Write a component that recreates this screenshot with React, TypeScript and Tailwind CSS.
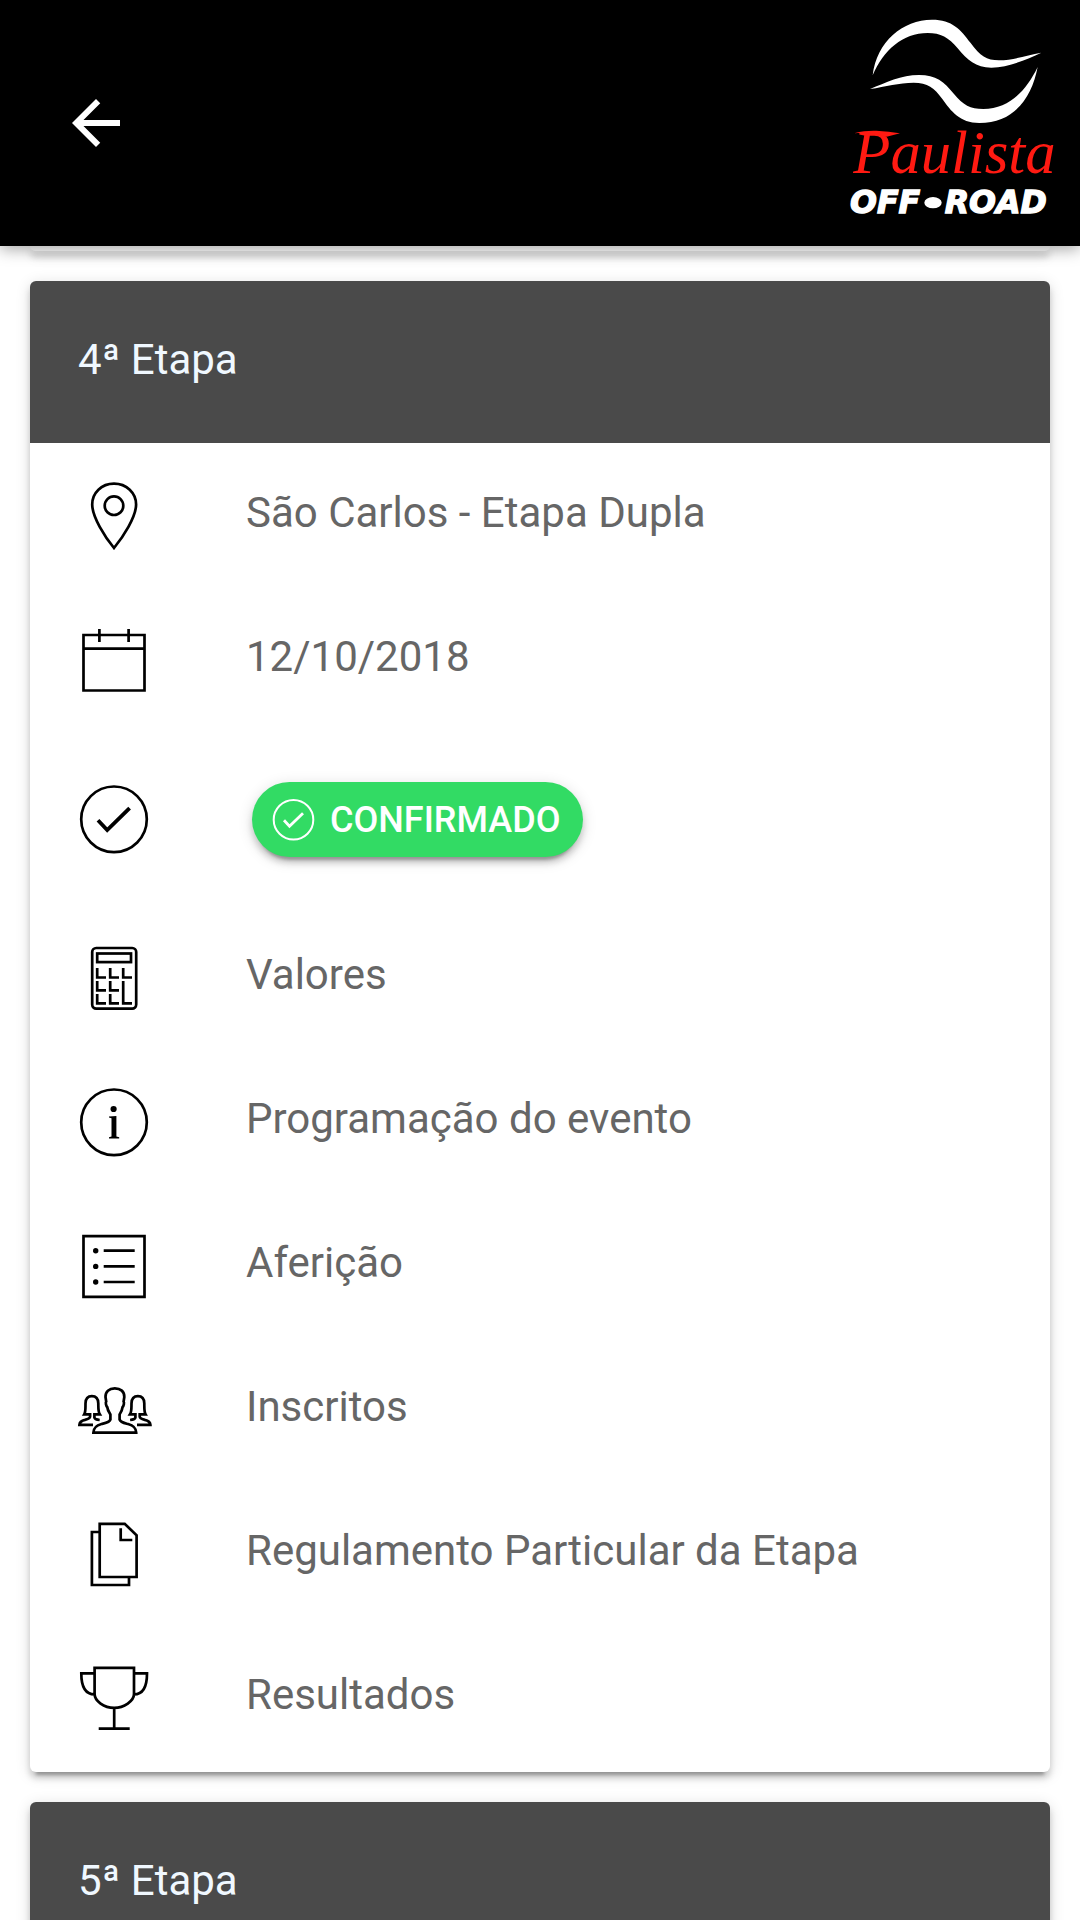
import { clsx } from 'clsx';
import type { ReactNode } from 'react';

const CARD_SHADOW =
  'shadow-[0_6px_6px_0_rgba(0,0,0,0.16),0_9px_3px_-6px_rgba(0,0,0,0.24),0_3px_15px_0_rgba(0,0,0,0.14)]';

function Icon({ children }: { children: ReactNode }) {
  return (
    <svg
      viewBox="0 0 84 84"
      className="size-21 shrink-0"
      fill="none"
      stroke="currentColor"
      strokeWidth="2.7"
      aria-hidden="true"
    >
      {children}
    </svg>
  );
}

const icons = {
  pin: (
    <Icon>
      <path d="M42 9.7C29.5 9.7 20.2 19 20.2 30.5C20.2 43 33 63 42 74C51 63 64.1 43 64.1 30.5C64.1 19 54.5 9.7 42 9.7Z" />
      <circle cx="42" cy="31.7" r="9.3" />
    </Icon>
  ),
  calendar: (
    <Icon>
      <path d="M11.5 17H72.5V72.5H11.5ZM11.5 30.7H72.5M27.4 11V24M56.6 11V24" />
    </Icon>
  ),
  check: (
    <Icon>
      <circle cx="42" cy="42.3" r="32.8" />
      <path strokeWidth="3.8" d="M26 43.3L35.2 53.1L57.6 31.1" />
    </Icon>
  ),
  calculator: (
    <Icon>
      <rect x="20.2" y="12" width="44" height="60.6" rx="4" />
      <rect x="25.2" y="17.5" width="33.8" height="8.6" />
      <path d="M25.2 32V41.5H34M38.2 32V41.5H47M51.2 32V41.5H60M25.2 45V54.3H34M38.2 45V54.3H47M25.2 58V67.4H34M38.2 58V67.4H47M51.2 45V67.4H60" />
    </Icon>
  ),
  info: (
    <Icon>
      <circle cx="42" cy="42.3" r="32.8" />
      <circle cx="41.6" cy="29" r="3.1" fill="currentColor" stroke="none" />
      <path
        d="M37 36.4L44.4 36V56.4L47.2 57.2V58.4H37V57.2L39.5 56.4V38.2L37 37.4Z"
        fill="currentColor"
        stroke="none"
      />
    </Icon>
  ),
  list: (
    <Icon>
      <path d="M11.5 12.2H72.5V72.8H11.5ZM31.7 26.7H62.7M31.7 42.4H62.7M31.7 58H62.7" />
      <g fill="currentColor" stroke="none">
        <circle cx="23.7" cy="26.7" r="2.7" />
        <circle cx="23.7" cy="42.4" r="2.7" />
        <circle cx="23.7" cy="58" r="2.7" />
      </g>
    </Icon>
  ),
  people: (
    <Icon>
      <path d="M42.8 20.4C37 20.4 33.3 23.5 33.5 29L34.2 33.5C33.4 34.5 34 38 35.3 39.2C35.8 43 37.5 44.5 38.4 46.5V51.5C37.5 54.5 33.5 55 29.5 56C24 57.5 21.6 59.5 21.4 64.6H64.2C64 59.5 61.6 57.5 56.1 56C52 55 48.5 54.5 47.6 51.5V46.5C48.5 44.5 50 43 50.5 39.2C51.8 38 52.4 34.5 51.6 33.5L52.3 29C52.5 23.5 48.6 20.4 42.8 20.4Z" />
      <path d="M21 56.8H7.4C7.6 53.6 10 52.6 13 51.9C16.5 51 18.1 50.3 18.1 48.5V46.3H12.2C13.8 43.5 13.4 39.5 13.5 35.5C13.6 30.8 15.8 28.2 19.9 28.2C24 28.2 26.2 30.8 26.3 35.5C26.4 39.5 26 43.5 27.8 46.3H22.4V49.5C22.6 51 24.3 51.6 27.7 52" />
      <path d="M65 56.8H78.4C78.2 53.6 75.8 52.6 72.8 51.9C69.3 51 67.7 50.3 67.7 48.5V46.3H73.6C72 43.5 72.4 39.5 72.3 35.5C72.2 30.8 70 28.2 65.9 28.2C61.8 28.2 59.6 30.8 59.5 35.5C59.4 39.5 59.8 43.5 58 46.3H63.4V49.5C63.2 51 61.5 51.6 58.1 52" />
    </Icon>
  ),
  documents: (
    <Icon>
      <path d="M27.7 11.8H52.7L64.6 23.3V65H27.7ZM27.7 20H19.9V73H57V65M48.7 16.3V28H60.3" />
    </Icon>
  ),
  trophy: (
    <Icon>
      <path d="M22.6 11.8H62V38C62 45 52 51.8 42.2 51.8C32 51.8 22.6 45 22.6 38ZM42.2 51.8V72.6M26.7 72.6H57.7M22.6 17.4H9.3C9.3 30 13 38.3 22.6 38.3M62 17.4H75C75 30 71.3 38.3 62 38.3" />
    </Icon>
  ),
};

const ITEMS = [
  { icon: icons.calculator, label: 'Valores' },
  { icon: icons.info, label: 'Programação do evento' },
  { icon: icons.list, label: 'Aferição' },
  { icon: icons.people, label: 'Inscritos' },
  { icon: icons.documents, label: 'Regulamento Particular da Etapa' },
  { icon: icons.trophy, label: 'Resultados' },
];

function Logo() {
  return (
    <svg viewBox="0 0 720 738" className="h-[246px] w-60" role="img" aria-label="Paulista Off-Road">
      <g fill="#fff">
        <path d="M98 226C110 125 188 59 276 59C337 59 362 89 392 129C421 168 439 181 477 181C520 181 559 166 604 158C560 178 506 203 454 203C407 203 382 180 353 145C326 112 302 99 263 99C188 99 131 150 98 226Z" />
        <path d="M90 267C137 248 184 225 237 225C288 225 312 245 342 282C369 315 391 327 430 327C507 327 558 273 593 201C575 294 522 369 418 369C359 369 333 333 307 297C283 263 263 248 221 248C176 248 138 260 90 267Z" />
      </g>
      <text x="40" y="520" className="fill-[#ff1a12] font-['Liberation_Serif'] text-[182px] italic">
        Paulista
      </text>
      <path d="M42 400C90 388 120 392 180 400L140 410C110 400 78 398 42 400Z" fill="#ff1a12" />
      <g className="fill-white stroke-white font-['DejaVu_Sans'] text-[95px] font-bold italic" strokeWidth="4">
        <text x="30" y="640">
          OFF
        </text>
        <text x="314" y="640">
          ROAD
        </text>
      </g>
      <ellipse cx="279" cy="608" rx="26" ry="17" fill="#fff" />
    </svg>
  );
}

function Header() {
  return (
    <header className="relative z-10 flex shrink-0 items-center justify-between bg-black shadow-[0_3px_15px_0_rgba(0,0,0,0.36)]">
      <button type="button" aria-label="Voltar" className="ml-15 text-white">
        <svg viewBox="0 0 24 24" className="size-18" fill="currentColor" aria-hidden="true">
          <path d="M20 11H7.83l5.59-5.59L12 4l-8 8 8 8 1.41-1.41L7.83 13H20v-2z" />
        </svg>
      </button>
      <Logo />
    </header>
  );
}

function StageCard({ title, children }: { title: string; children?: ReactNode }) {
  return (
    <section className={clsx('shrink-0 rounded-md bg-white', CARD_SHADOW)}>
      <h2 className="flex h-[162px] items-center rounded-t-md bg-[#4a4a4a] px-12 pb-1 text-[42px] leading-[48px] text-[#f0f8ff]">
        {title}
      </h2>
      {children}
    </section>
  );
}

const ROW = 'flex h-36 w-full items-center gap-[90px] px-[42px] text-left';
const LABEL = 'pb-1.5 text-[42px] leading-[48px] text-[#666]';

export default function App() {
  return (
    <div className="flex h-screen flex-col overflow-hidden bg-white font-['Roboto',sans-serif]">
      <Header />
      <main className="flex min-h-0 flex-1 flex-col gap-[30px] overflow-hidden px-[30px]">
        <div className={clsx('h-[5px] shrink-0 rounded-b-md bg-white', CARD_SHADOW)} />
        <StageCard title="4ª Etapa">
          <ul className="pt-px pb-0.5 text-black">
            <li className={ROW}>
              {icons.pin}
              <span className={LABEL}>São Carlos - Etapa Dupla</span>
            </li>
            <li className={ROW}>
              {icons.calendar}
              <time dateTime="2018-10-12" className={LABEL}>
                12/10/2018
              </time>
            </li>
            <li className="flex h-[174px] items-center gap-24 px-[42px]">
              {icons.check}
              <button
                type="button"
                className="flex h-[75px] items-center gap-3 rounded-full bg-[#32db64] pr-[22px] pl-4 text-[36px] leading-10 font-medium text-white shadow-[0_6px_6px_0_rgba(0,0,0,0.16),0_9px_3px_-6px_rgba(0,0,0,0.24),0_3px_15px_0_rgba(0,0,0,0.14)]"
              >
                <svg viewBox="0 0 50 50" className="size-[50px]" fill="none" stroke="currentColor" aria-hidden="true">
                  <circle cx="25.5" cy="25.8" r="19.8" strokeWidth="2" />
                  <path strokeWidth="2.8" d="M16 26.3L21.5 32.3L35 19.3" />
                </svg>
                <span className="pt-0.5">CONFIRMADO</span>
              </button>
            </li>
            {ITEMS.map((item) => (
              <li key={item.label}>
                <button type="button" className={ROW}>
                  {item.icon}
                  <span className={LABEL}>{item.label}</span>
                </button>
              </li>
            ))}
          </ul>
        </StageCard>
        <StageCard title="5ª Etapa" />
      </main>
    </div>
  );
}
